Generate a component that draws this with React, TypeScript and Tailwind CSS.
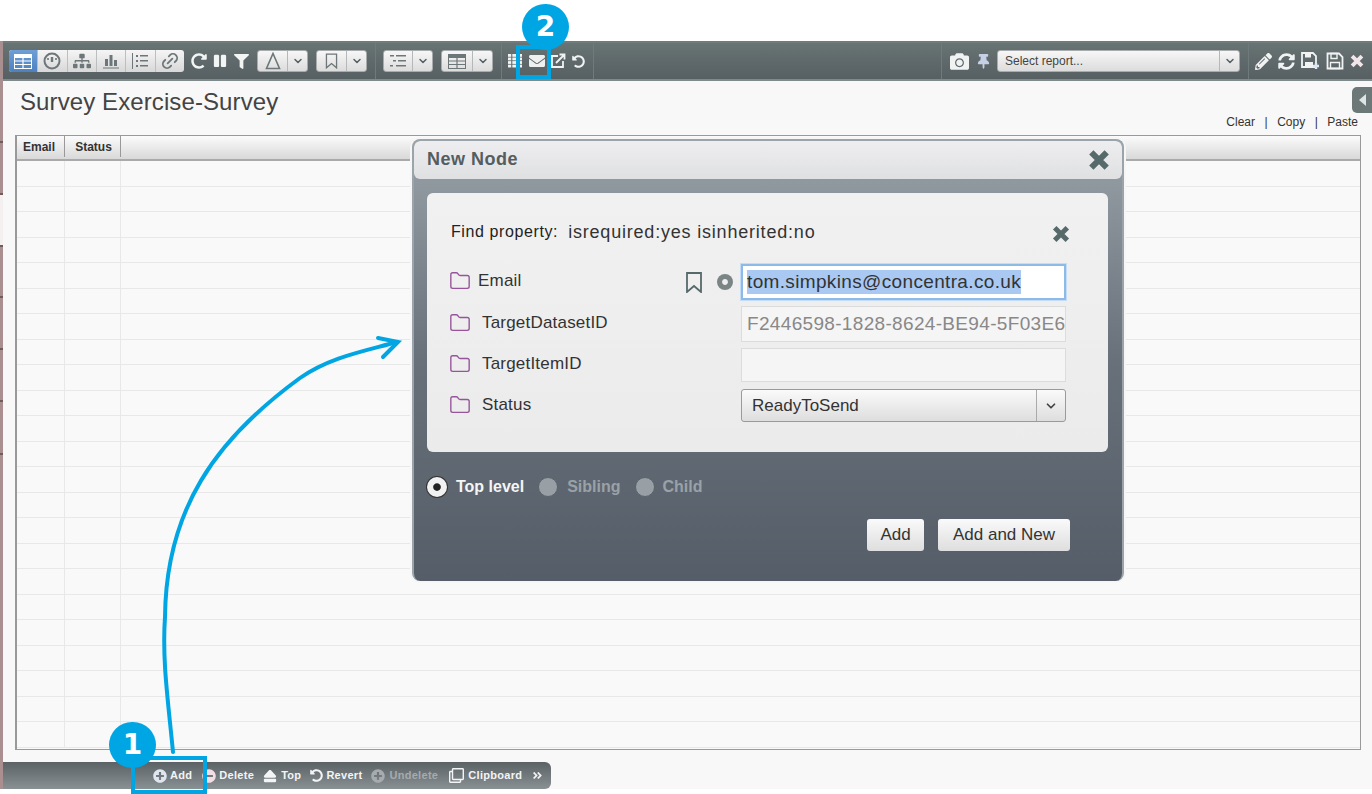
import React from "react";
import { ChevronDown, Folder, Link2 } from "lucide-react";
import {
  FaAngleDoubleRight,
  FaCamera,
  FaCircle,
  FaEject,
  FaEnvelope,
  FaFilter,
  FaMinusCircle,
  FaPause,
  FaPencilAlt,
  FaPlusCircle,
  FaRedoAlt,
  FaRegClone,
  FaSitemap,
  FaSyncAlt,
  FaThumbtack,
  FaUndoAlt,
} from "react-icons/fa";

const TableIcon = ({ color = "#6d7678" }: { color?: string }) => (
  <svg width="18" height="15" viewBox="0 0 18 15">
    <rect x="0.5" y="0.5" width="17" height="14" fill="none" stroke={color} />
    <rect x="0.5" y="0.5" width="17" height="3.5" fill={color} />
    <path d="M1 7h16M1 10.500h16M9 4v10" stroke={color} strokeWidth="1.2" />
  </svg>
);

const GaugeIcon = () => (
  <svg width="18" height="18" viewBox="0 0 18 18" fill="none" stroke="#6d7678">
    <circle cx="9" cy="9" r="7.500" strokeWidth="2" />
    <path d="M9 5v5" strokeWidth="2.400" />
    <path d="M5 6v2M13 6v2" strokeWidth="1.600" />
  </svg>
);

const BarsIcon = () => (
  <svg width="16" height="16" viewBox="0 0 16 16" fill="#6d7678">
    <rect x="2" y="6" width="3" height="7" />
    <rect x="6.500" y="2" width="3" height="11" />
    <rect x="11" y="7" width="3" height="6" />
    <rect x="0" y="14.500" width="16" height="1" />
  </svg>
);

const RuleListIcon = () => (
  <svg width="17" height="16" viewBox="0 0 17 16" fill="#6d7678">
    <rect x="0" y="0" width="1" height="16" />
    <rect x="4" y="2" width="2" height="2" />
    <rect x="8" y="2" width="8" height="1.500" />
    <rect x="4" y="7" width="2" height="2" />
    <rect x="8" y="7" width="8" height="1.500" />
    <rect x="4" y="12" width="2" height="2" />
    <rect x="8" y="12" width="8" height="1.500" />
  </svg>
);

const ListIcon = ({ color = "#6d7678" }: { color?: string }) => (
  <svg width="18" height="14" viewBox="0 0 18 14" fill={color}>
    <rect x="1" y="1" width="4" height="1.500" />
    <rect x="7" y="1" width="10" height="1.500" />
    <rect x="4" y="6" width="3" height="1.500" />
    <rect x="9" y="6" width="8" height="1.500" />
    <rect x="1" y="11" width="3" height="1.500" />
    <rect x="7" y="11" width="10" height="1.500" />
  </svg>
);

const DeltaIcon = () => (
  <svg width="16" height="18" viewBox="0 0 16 18" fill="none" stroke="#6d7678" strokeWidth="1.600">
    <path d="M8 1.500L14.500 16.500H1.500Z" />
  </svg>
);

const BookmarkIcon = ({ w, h, color = "#6d7678" }: { w: number; h: number; color?: string }) => (
  <svg width={w} height={h} viewBox="0 0 18 21" fill="none" stroke={color} strokeWidth="1.800">
    <path d="M2 1h14v19l-7-6-7 6z" />
  </svg>
);

const XIcon = ({ size, color, className = "" }: { size: number; color: string; className?: string }) => (
  <svg width={size} height={size} viewBox="0 0 20 20" fill="none" stroke={color} strokeWidth="5.500" className={className}>
    <path d="M3 3l14 14M17 3L3 17" />
  </svg>
);

const GridWhite = () => (
  <svg width="14" height="14" viewBox="0 0 13 13" fill="#f1f3f3">
    {[0, 3.3, 6.6, 9.9].map((y) => (
      <React.Fragment key={y}>
        <rect x="0" y={y} width="3" height="2.600" />
        <rect x="4" y={y} width="4" height="2.600" />
        <rect x="9" y={y} width="4" height="2.600" />
      </React.Fragment>
    ))}
  </svg>
);

const OpenOut = () => (
  <svg width="16" height="16" viewBox="0 0 16 16" fill="none" stroke="#f1f3f3" strokeWidth="1.800">
    <path d="M8 3H2v11h11V8" />
    <path d="M6 10l8-8M9.500 1.500h5v5" />
  </svg>
);

const SaveIcon = () => (
  <svg width="18" height="18" viewBox="0 0 18 18">
    <path d="M1.500 1.500h11.500l3.500 3.500v11.500H1.500z" fill="none" stroke="#f1f3f3" strokeWidth="1.800" />
    <path d="M5 1.500h6v5H5zM4.500 10.500h9v6h-9z" fill="none" stroke="#f1f3f3" strokeWidth="1.400" />
  </svg>
);

const SavePlus = () => (
  <svg width="20" height="20" viewBox="0 0 20 20">
    <path d="M2 2h11l3 3v11H2z" fill="none" stroke="#f1f3f3" strokeWidth="1.800" />
    <path d="M5 2.500h6v4H5zM5 11h8v5H5z" fill="#f1f3f3" />
    <path d="M13 15h6M16 12v6" stroke="#dfe7f3" strokeWidth="2.400" />
  </svg>
);

const ToolButton = ({ children, active }: { children: React.ReactNode; active?: boolean }) => (
  <div
    className={`flex h-[22px] flex-1 items-center justify-center border-r border-[#bcbfc0] last:border-r-0 ${
      active ? "bg-gradient-to-b from-[#6f9fd6] to-[#4c81c0]" : ""
    }`}
  >
    {children}
  </div>
);

const Split = ({ children, w }: { children: React.ReactNode; w: string }) => (
  <div className={`flex h-[22px] overflow-hidden rounded-[3px] border border-[#a8acad] bg-gradient-to-b from-[#f7f7f7] to-[#dcdcdc] ${w}`}>
    <div className="flex flex-1 items-center justify-center border-r border-[#b5b8b9]">{children}</div>
    <div className="flex w-[19px] items-center justify-center">
      <ChevronDown size={12} strokeWidth={3} color="#555f63" />
    </div>
  </div>
);

const Sep = ({ ml, mr }: { ml: string; mr: string }) => <div className={`h-full w-px bg-[#6f7a7c] ${ml} ${mr}`} />;

const Toolbar = () => (
  <div className="flex h-[40px] shrink-0 items-center border-t-2 border-b-2 border-t-[#707c7c] border-b-[#7f8b8b] bg-gradient-to-b from-[#687373] to-[#566063] pr-[8px]">
    <div className="ml-[6px] flex h-[22px] w-[175px] overflow-hidden rounded-[3px] bg-gradient-to-b from-[#f5f5f5] to-[#d8d8d8]">
      <ToolButton active>
        <TableIcon color="#ffffff" />
      </ToolButton>
      <ToolButton>
        <GaugeIcon />
      </ToolButton>
      <ToolButton>
        <FaSitemap size={18} color="#6d7678" />
      </ToolButton>
      <ToolButton>
        <BarsIcon />
      </ToolButton>
      <ToolButton>
        <RuleListIcon />
      </ToolButton>
      <ToolButton>
        <Link2 size={20} color="#6d7678" strokeWidth={2.200} className="-rotate-45" />
      </ToolButton>
    </div>
    <FaRedoAlt size={16} color="#f3f5f5" className="ml-[7px]" />
    <FaPause size={14} color="#f3f5f5" className="ml-[6px]" />
    <FaFilter size={15} color="#f3f5f5" className="ml-[7px]" />
    <div className="ml-[8px] flex gap-2">
      <Split w="w-[51px]">
        <DeltaIcon />
      </Split>
      <Split w="w-[51px]">
        <BookmarkIcon w={13} h={16} />
      </Split>
    </div>
    <Sep ml="ml-[8px]" mr="mr-[7px]" />
    <div className="flex gap-2">
      <Split w="w-[50px]">
        <ListIcon />
      </Split>
      <Split w="w-[52px]">
        <TableIcon />
      </Split>
    </div>
    <Sep ml="ml-[8px]" mr="mr-[6px]" />
    <GridWhite />
    <FaEnvelope size={16} color="#eef0f0" className="ml-[7px]" />
    <div className="ml-[5px]">
      <OpenOut />
    </div>
    <FaUndoAlt size={13} color="#f1f3f3" className="ml-[6px]" />
    <Sep ml="ml-[8px]" mr="mr-0" />
    <div className="flex-1" />
    <Sep ml="ml-0" mr="mr-[8px]" />
    <FaCamera size={19} color="#f1f3f3" />
    <FaThumbtack size={15} color="#c5cfe6" className="ml-[7px]" />
    <div className="ml-[6px] flex h-[22px] w-[243px] items-center rounded-[3px] border border-[#a8acad] bg-gradient-to-b from-[#f7f7f7] to-[#dcdcdc]">
      <span className="flex-1 pl-[7px] text-[12px] text-[#444]">Select report...</span>
      <div className="flex h-full w-[20px] items-center justify-center border-l border-[#b5b8b9]">
        <ChevronDown size={12} strokeWidth={3} color="#555f63" />
      </div>
    </div>
    <Sep ml="ml-[8px]" mr="mr-[6px]" />
    <FaPencilAlt size={17} color="#f1f3f3" />
    <FaSyncAlt size={17} color="#f1f3f3" className="ml-[6px]" />
    <div className="ml-[5px]">
      <SavePlus />
    </div>
    <div className="ml-[6px]">
      <SaveIcon />
    </div>
    <XIcon size={14} color="#f3e6ea" className="ml-[6px]" />
  </div>
);

const rows = Array.from({ length: 23 });

const DataTable = () => (
  <div className="mr-[11px] flex-1 overflow-hidden border border-l-2 border-[#999] bg-[#f9f9f9]">
    <div className="flex h-[25px] border-b-2 border-[#aaa] bg-gradient-to-b from-[#fbfbfb] to-[#d9d9d9] pb-[2px] text-[12px] font-bold text-[#333]">
      <div className="flex w-[48px] items-center justify-center border-r border-[#999] pr-[3px]">Email</div>
      <div className="flex w-[56px] items-center justify-center border-r border-[#999] pl-[2px]">Status</div>
    </div>
    {rows.map((_, i) => (
      <div key={i} className="flex h-[25.500px] border-b border-[#e8e8e8]">
        <div className="w-[48px] border-r border-[#e8e8e8]" />
        <div className="w-[56px] border-r border-[#e8e8e8]" />
      </div>
    ))}
  </div>
);

const FieldRow = ({ label, gap, children, h }: { label: string; gap: string; children?: React.ReactNode; h: string }) => (
  <div className={`flex items-center ${h}`}>
    <Folder size={22} color="#96559a" strokeWidth={1.500} className="-ml-[2px] mb-[2px]" />
    <span className={`mb-[2px] w-[202px] text-[17px] tracking-[0.2px] text-[#333] ${gap}`}>{label}</span>
    <div className="flex flex-1 items-center justify-end">{children}</div>
  </div>
);

const Modal = () => (
  <div className="absolute left-[412px] top-[139px] h-[442px] w-[712px] overflow-hidden rounded-[8px] border-2 border-b-0 border-[#9aa4aa] bg-gradient-to-b from-[#99a1a8] via-[#68717a] to-[#555e68] shadow-[0_0_0_2px_#f6f6f6]">
    <div className="flex h-[38px] items-center justify-between rounded-[6px] bg-gradient-to-b from-[#eeeef0] to-[#dfe0e2] pl-[13px] pr-[12px]">
      <span className="mb-[2px] text-[18px] font-bold tracking-[0.5px] text-[#555d60]">New Node</span>
      <XIcon size={22} color="#566a6b" />
    </div>
    <div className="ml-[13px] mt-[14px] h-[259px] w-[681px] rounded-[6px] bg-gradient-to-b from-[#f1f1f1] to-[#ebebeb] pl-[24px] pr-[42px] pt-[27px]">
      <div className="flex h-[24px] items-center text-[#222]">
        <span className="text-[16px] tracking-[0.6px]">Find property:</span>
        <span className="ml-[10px] text-[18px] tracking-[0.8px] text-[#333]">isrequired:yes isinherited:no</span>
        <XIcon size={18} color="#566a6b" className="-mr-[4px] ml-auto mt-[4px]" />
      </div>
      <div className="mt-[20px] flex flex-col gap-[6px]">
        <FieldRow label="Email" gap="ml-[7px]" h="h-[36px]">
          <div className="mr-[14px]">
            <BookmarkIcon w={18} h={21} color="#56696a" />
          </div>
          <div className="mr-[8px] flex h-[16px] w-[16px] items-center justify-center rounded-full bg-[#7b8585]">
            <FaCircle size={6} color="#efefef" />
          </div>
          <div className="flex h-[36px] w-[325px] items-center border-2 border-[#8ebae8] bg-white pl-[4px] text-[19px] tracking-[0.35px] text-[#333] shadow-[0_0_0_1px_#c4dcf5]">
            <span className="bg-[#a9c9f2] leading-[24px]">tom.simpkins@concentra.co.uk</span>
          </div>
        </FieldRow>
        <FieldRow label="TargetDatasetID" gap="ml-[11px]" h="h-[36px]">
          <div className="flex h-[36px] w-[325px] items-center overflow-hidden whitespace-nowrap border border-[#dcdcdc] bg-[#f5f5f5] pl-[5px] text-[19px] tracking-[0.33px] text-[#888]">
            F2446598-1828-8624-BE94-5F03E6
          </div>
        </FieldRow>
        <FieldRow label="TargetItemID" gap="ml-[11px]" h="h-[34px]">
          <div className="h-[34px] w-[325px] border border-[#dcdcdc] bg-[#f5f5f5]" />
        </FieldRow>
        <div className="mt-px">
          <FieldRow label="Status" gap="ml-[11px]" h="h-[33px]">
            <div className="flex h-[33px] w-[325px] items-center rounded-[3px] border border-[#9a9a9a] bg-gradient-to-b from-[#fafafa] to-[#dedede]">
              <span className="flex-1 pl-[10px] text-[17px] text-[#333]">ReadyToSend</span>
              <div className="flex h-full w-[29px] items-center justify-center border-l border-[#aaa]">
                <ChevronDown size={14} strokeWidth={3} color="#444" />
              </div>
            </div>
          </FieldRow>
        </div>
      </div>
    </div>
    <div className="ml-[13px] mt-[23px] flex h-[24px] items-center text-[16px] font-bold">
      <div className="flex h-[20px] w-[20px] items-center justify-center rounded-full bg-[#f1f1f1] shadow-[0_0_0_1px_#333]">
        <FaCircle size={8} color="#222" />
      </div>
      <span className="ml-[9px] text-[#f4f5f5]">Top level</span>
      <div className="ml-[14px] h-[20px] w-[20px] rounded-full border border-[#5b636a] bg-[#98a0a6]" />
      <span className="ml-[9px] text-[#9aa1a7]">Sibling</span>
      <div className="ml-[14px] h-[20px] w-[20px] rounded-full border border-[#5b636a] bg-[#98a0a6]" />
      <span className="ml-[8px] text-[#9aa1a7]">Child</span>
    </div>
    <div className="mr-[52px] mt-[20px] flex justify-end gap-[14px] text-[17px] text-[#333]">
      <div className="flex h-[32px] w-[57px] items-center justify-center rounded-[3px] bg-gradient-to-b from-[#fafafa] to-[#dedede]">Add</div>
      <div className="flex h-[32px] w-[132px] items-center justify-center rounded-[3px] bg-gradient-to-b from-[#fafafa] to-[#dedede]">Add and New</div>
    </div>
  </div>
);

const BottomBar = () => (
  <div className="flex h-[27px] w-[548px] shrink-0 items-center rounded-r-[6px] bg-gradient-to-b from-[#5b6265] to-[#8a9194] pl-[150px] text-[11px] font-bold tracking-[0.3px] text-[#f3f4f5]">
    <FaPlusCircle size={14} color="#e0e6ef" />
    <span className="ml-[3px]">Add</span>
    <FaMinusCircle size={14} color="#f5dde6" className="ml-[10px]" />
    <span className="ml-[3px]">Delete</span>
    <FaEject size={14} className="ml-[9px]" />
    <span className="ml-[4px]">Top</span>
    <FaUndoAlt size={13} className="ml-[9px]" />
    <span className="ml-[3px]">Revert</span>
    <FaPlusCircle size={14} color="#a5abae" className="ml-[9px]" />
    <span className="ml-[4px] text-[#a5abae]">Undelete</span>
    <FaRegClone size={15} className="ml-[11px]" />
    <span className="ml-[4px]">Clipboard</span>
    <FaAngleDoubleRight size={11} className="ml-[10px]" />
  </div>
);

const Annotations = () => (
  <>
    <svg className="absolute left-0 top-0" width="1372" height="794" fill="none" stroke="#00a5e3" strokeWidth="4" strokeLinecap="round">
      <path d="M173 752C168 700 162 660 165 617C166 510 215 440 300 378C330 357 365 351 397 342" />
      <path d="M378 338L398 342L383 357" />
    </svg>
    <div className="absolute left-[516px] top-[45px] h-[34px] w-[35px] border-[4px] border-[#00a5e3]" />
    <div className="absolute left-[131px] top-[756px] h-[38px] w-[76px] border-[4px] border-[#00a5e3]" />
    <div className="absolute left-[522px] top-[4px] flex h-[46px] w-[47px] items-center justify-center rounded-full bg-[#00a5e3] font-['DejaVu_Sans'] text-[28px] font-bold text-white">
      2
    </div>
    <div className="absolute left-[109px] top-[722px] flex h-[46px] w-[47px] items-center justify-center rounded-full bg-[#00a5e3] font-['DejaVu_Sans'] text-[28px] font-bold text-white">
      1
    </div>
  </>
);

// the cut-off panels of the page behind, at the left edge
const edgeTicks = [102, 52, 52, 51, 52, 52, 53];

const LeftEdge = () => (
  <div className="flex w-[3px] shrink-0 flex-col bg-[#a98f90]">
    {edgeTicks.map((h, i) => (
      <div key={i} className={`shrink-0 border-b-2 border-[#6f5c5d] ${i === 2 ? "bg-[#f4f0f0]" : ""}`} style={{ height: h }} />
    ))}
  </div>
);

const App: React.FC = () => {
  return (
    <div className="relative h-[794px] w-[1372px] overflow-hidden bg-white font-['Liberation_Sans',Arial,sans-serif]">
      <div className="h-[41px]" />
      <div className="flex h-[748px]">
        <LeftEdge />
        <div className="flex min-w-0 flex-1 flex-col bg-[#f8f8f8]">
          <Toolbar />
          <div className="flex min-h-0 flex-1 flex-col pb-[12px] pl-[12px]">
            <div className="relative h-[54px] shrink-0">
              <h1 className="pl-[5px] pt-[7px] text-[24px] font-normal leading-[28px] tracking-[0.1px] text-[#444]">Survey Exercise-Survey</h1>
              <div className="absolute right-0 top-[6px] flex h-[26px] w-[20px] items-center justify-center rounded-l-[5px] bg-[#6c7777]">
                <div className="h-0 w-0 border-y-[6px] border-r-[7px] border-y-transparent border-r-[#dfe5e5]" />
              </div>
              <div className="absolute right-[14px] top-[32px] flex gap-[9.500px] text-[12px] text-[#333]">
                <span>Clear</span>
                <span>|</span>
                <span>Copy</span>
                <span>|</span>
                <span>Paste</span>
              </div>
            </div>
            <DataTable />
          </div>
          <BottomBar />
        </div>
      </div>
      <Modal />
      <Annotations />
    </div>
  );
};

export default App;
